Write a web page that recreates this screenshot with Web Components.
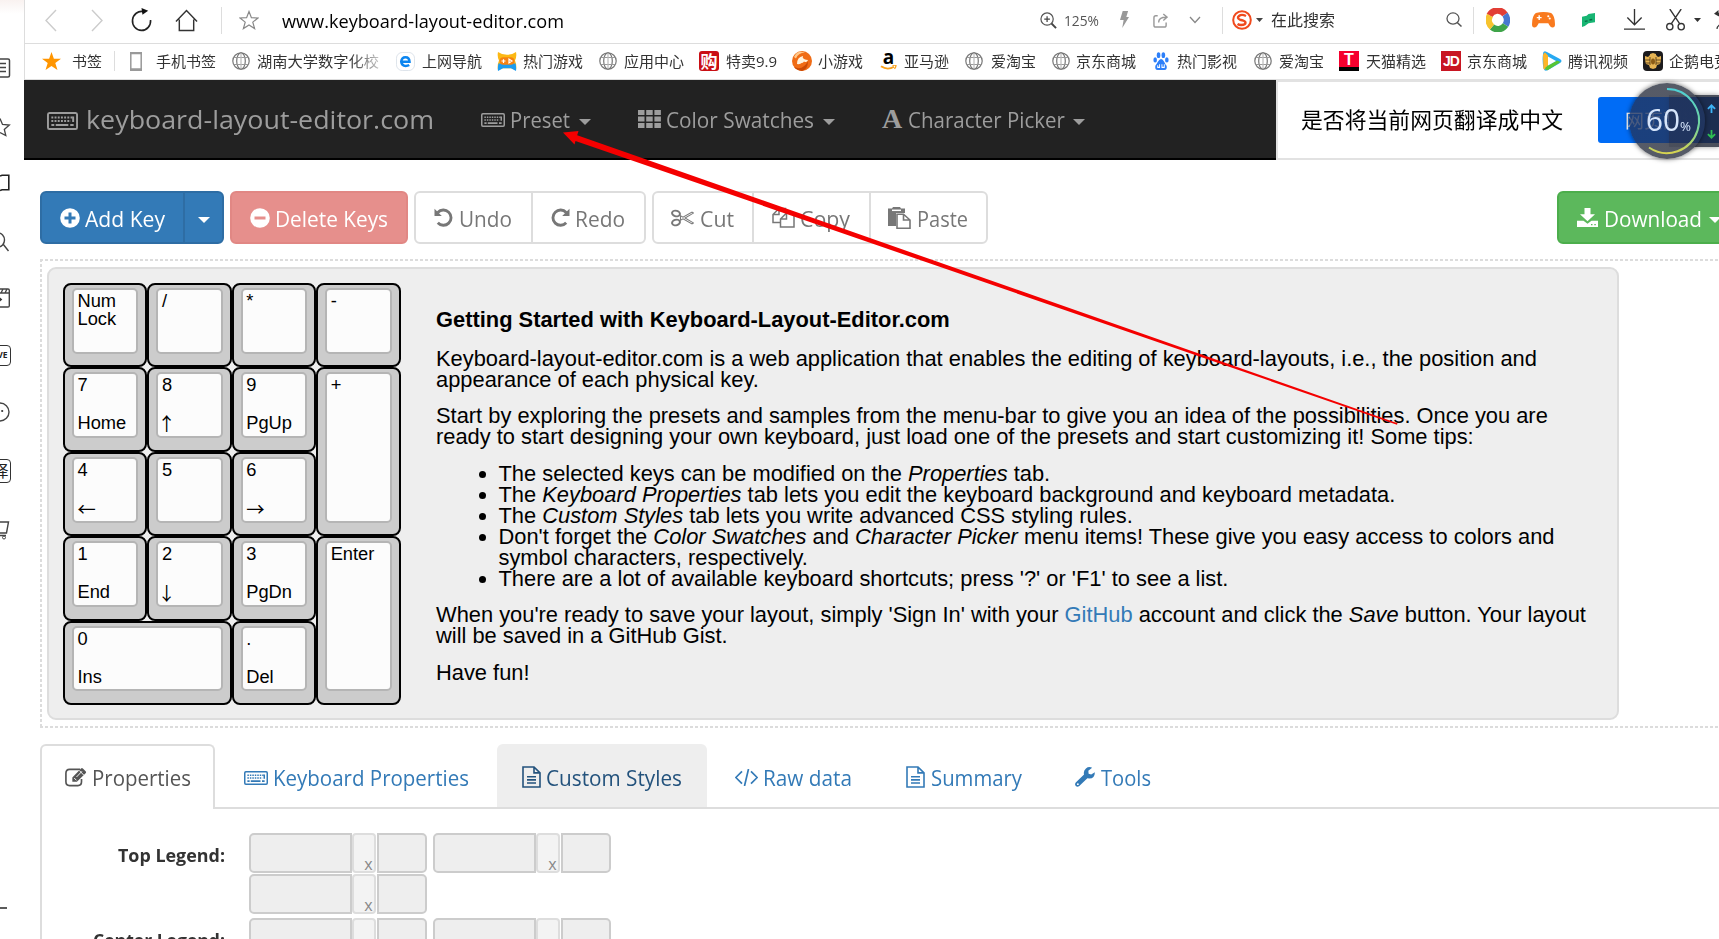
<!DOCTYPE html>
<html lang="zh-CN">
<head>
<meta charset="utf-8">
<title>keyboard-layout-editor.com</title>
<style>
html,body{margin:0;padding:0;width:1719px;height:939px;overflow:hidden;background:#fff}
body{font-family:"Open Sans","Noto Sans CJK SC",sans-serif;color:#333}
</style>
</head>
<body>
<browser-window></browser-window>
<script>
const define=(name,html,init)=>customElements.define(name,class extends HTMLElement{
  constructor(){super();this.attachShadow({mode:'open'});}
  connectedCallback(){this.shadowRoot.innerHTML=typeof html==='function'?html(this):html;if(init)init(this);}
});
const at=(e,n,d='')=>e.getAttribute(n)??d;

/* Icon set: [viewBox, markup]. */
const kb=`<rect x="1" y="1" width="30" height="16" rx="1.5" fill="none" stroke="currentColor" stroke-width="2"/><path d="M4.5 5.5h23M4.5 9h20" stroke="currentColor" stroke-width="2" stroke-dasharray="2 1.3" fill="none"/><path d="M4.5 13h3M9 13h13M24 13h3.500M27 4.500v5.500" stroke="currentColor" stroke-width="2" fill="none"/>`;
const doc=`<path d="M1 1h11l6 6v14.500H1zM12 1v6h6M5 11h9M5 14.200h9M5 17.400h9" fill="none" stroke="currentColor" stroke-width="1.600"/>`;
const ICONS={
back:['0 0 12 24','<path d="M11 1 1 12l10 11" fill="none" stroke="#ccc" stroke-width="1.4"/>'],
fwd:['0 0 12 24','<path d="M1 1l10 11L1 23" fill="none" stroke="#ccc" stroke-width="1.4"/>'],
reload:['0 0 22 24','<path d="M13 3.600A9.500 9.500 0 1 0 20.500 12" fill="none" stroke="#222" stroke-width="1.700"/><path d="M11 0l7 2.800-6 4z" fill="#111"/>'],
home:['0 0 24 24','<path d="M1 13 12 1.500 23 13M4.500 11v11.500h15V11" fill="none" stroke="#333" stroke-width="1.500"/>'],
starline:['0 0 20 20','<path d="M10 1.500l2.400 6.200 6.600.3-5.200 4.100 1.800 6.500L10 15l-5.600 3.600 1.800-6.500L1 8l6.600-.3z" fill="none" stroke="currentColor" stroke-width="1.200"/>'],
star:['0 0 20 20','<path d="M10 0l2.500 7H20l-6 4.500 2.300 7.500L10 14.800 3.700 19 6 11.500 0 7h7.500z" fill="#ff9500"/>'],
zoomin:['0 0 18 18','<circle cx="7.500" cy="7.500" r="6.500" fill="none" stroke="#555" stroke-width="1.300"/><path d="M12.200 12.200 17 17" stroke="#444" stroke-width="2"/><path d="M7.500 4.500v6M4.500 7.500h6" stroke="#444" stroke-width="1.300"/>'],
bolt:['0 0 10 17','<path d="M3 0h6L7 6h3L2.500 17 4 9H0z" fill="#999"/>'],
share:['0 0 16 16','<path d="M5 3H3Q1 3 1 5v8q0 2 2 2h9q2 0 2-2v-3M6 10Q6 4.500 14 4.500M11 1l4 3.500L11 8" fill="none" stroke="#999" stroke-width="1.500"/>'],
chev:['0 0 12 8','<path d="M1 1l5 5.500L11 1" fill="none" stroke="#888" stroke-width="1.300"/>'],
sogou:['0 0 20 20','<circle cx="10" cy="10" r="8.800" fill="none" stroke="#f04a1d" stroke-width="2"/><path d="M14 6Q9.500 3.800 7 6t1 3.700q5.500 1 5.500 3T9 15q-2 0-3.500-1" fill="none" stroke="#f04a1d" stroke-width="2.400"/>'],
search:['0 0 16 16','<circle cx="7" cy="7" r="6" fill="none" stroke="#555" stroke-width="1.300"/><path d="M11.200 11.200 15.500 15.500" stroke="#555" stroke-width="1.500"/>'],
ring:['0 0 24 24','<g fill="none" stroke-width="6.500"><path d="M3.500 7.500A9 9 0 0 1 19 6.500" stroke="#e23e35"/><path d="M19 6.500A9 9 0 0 1 19.500 17" stroke="#4878cf"/><path d="M19.500 17A9 9 0 0 1 6 19" stroke="#3fa44a"/><path d="M6 19A9 9 0 0 1 4 7.500" stroke="#f7c32e"/></g>'],
pad:['0 0 24 17','<path d="M4 1Q12-1 20 1q4 3 4 12 0 3.500-2.500 3.500T17 12H7q-2 4.500-4.500 4.500T0 13Q0 4 4 1z" fill="#f97a1f"/><path d="M5 6h5M7.500 3.500v5" stroke="#fff" stroke-width="1.500"/><circle cx="17" cy="4.500" r="1.100" fill="#fff"/><circle cx="18.500" cy="7" r="1.100" fill="#fff"/>'],
green:['0 0 14 15','<path d="M0 4l5-1 2-2 7-1v10l-7 1-4 3-3 1z" fill="#18b573"/><path d="M3 9l3-.6M8 7.500l3-.6" stroke="#086c45" stroke-width="1.500"/>'],
dl:['0 0 22 22','<path d="M11 0v16M3.500 9l7.500 7.500L18.500 9M0 21h22" fill="none" stroke="#333" stroke-width="1.400"/>'],
scis:['0 0 20 23','<g fill="none" stroke="#333" stroke-width="1.400"><circle cx="4" cy="18.500" r="3.300"/><circle cx="16" cy="18.500" r="3.300"/><path d="M5.500 15.500 16 0M14.500 15.500 4 0"/></g>'],
arc:['0 0 8 22','<path d="M0 4l6-4v3h4v4H6z" fill="#333"/><path d="M4 21q0-3 4-5" fill="none" stroke="#333" stroke-width="1.500"/>'],
caret:['0 0 12 6','<path d="M0 0h12L6 6z" fill="currentColor"/>'],
phone:['0 0 12 19','<path d="M.8.8h10.400v17.400H.8z" fill="#fff" stroke="#999" stroke-width="1.500"/><path d="M0 1h12M0 17.500h12" stroke="#999" stroke-width="2.400"/>'],
globe:['0 0 18 18','<g fill="none" stroke="#777" stroke-width="1.200"><circle cx="9" cy="9" r="8.200"/><ellipse cx="9" cy="9" rx="4.300" ry="8.200"/><path d="M1.600 5.500h14.800M1.600 12.500h14.800" stroke="#999"/><path d="M9 1v16" stroke="#bbb"/></g>'],
edge:['0 0 20 20','<rect x=".5" y=".5" width="19" height="19" rx="6" fill="#fff" stroke="#dce3ea"/><path d="M5.500 10.200h8.700Q14 5.500 10 5.500T5.500 10.200Q6 14.700 10.200 14.700q2.200 0 3.700-1" fill="none" stroke="#0b85f0" stroke-width="2.700"/>'],
cat:['0 0 20 20','<path d="M1 0q4 3 9 3t9-3q1 5-1 9 2 5 1 10l-5-2H6l-5 2Q0 14 2 9 0 5 1 0z" fill="#fcb814"/><path d="M1.500 12h17q1 4 .5 8l-5-3H6l-5 3q-.5-4 .5-8z" fill="#1c9cf0"/><rect x="2.500" y="5.500" width="15" height="8" rx="4" fill="#f58213"/><path d="M4.500 9.500h4M6.500 7.500v4M12 7.500v4l3-2z" stroke="#fff" stroke-width="1.200" fill="none"/>'],
orange:['0 0 20 20','<circle cx="10" cy="10" r="10" fill="#f06c16"/><path d="M2 6Q5-1 13 1.500q-7 .5-9 6z" fill="#ffc98a"/><path d="M5 13q0-7 6-8-1 2 1 3t4 1q-1 3-4 1.500-1 1.500-2.500 1.500-1 1.500-4.500 1z" fill="#fff3df"/><path d="M2 16q9 4 14-6 0 8-6 10-6-1-8-4z" fill="#ca4a05"/>'],
smile:['0 0 17 7','<path d="M1 1.500q6.500 5 13 .5" fill="none" stroke="#f9a11b" stroke-width="2"/><path d="M12.500.5q3.500-.8 3.500.5t-1.500 3.500" fill="none" stroke="#f9a11b" stroke-width="1.300"/>'],
baidu:['0 0 17 17','<g fill="#2d7ff9"><ellipse cx="2.300" cy="7.500" rx="1.900" ry="2.500"/><ellipse cx="5.900" cy="3" rx="1.900" ry="2.700"/><ellipse cx="11" cy="3" rx="1.900" ry="2.700"/><ellipse cx="14.700" cy="7.500" rx="1.900" ry="2.500"/><path d="M8.500 6.500q2 0 3.500 3t2.500 3.500q.8 4-2.500 4H5q-3.300 0-2.500-4Q3.500 12 5 9.500t3.500-3z"/></g><path d="M5 12.500v2h2v-3M9.500 11.500v3h2.500v-3" stroke="#fff" fill="none"/>'],
tv:['0 0 20 20','<path d="M1 3Q1-1 5 1l13 7q3 2 0 4L6 19q-4 2-4.500-2Q0 10 1 3z" fill="#26a9f2"/><path d="M1 4q.5 -2 2-2.500l3 3v10l-3 4Q1 19 1.300 15z" fill="#fdb528"/><path d="M3 17l3-2.500 9-5 3.500 1.500L6 19q-2 1-3-2z" fill="#58c532"/><path d="M6 5.500v9l8-4.500z" fill="#fff"/>'],
goose:['0 0 20 20','<rect width="20" height="20" rx="4" fill="#1c1b1d"/><path d="M2 5l3 1 2-2V3l3-1 3 1v1l2 2 3-1v4l-1 4-3 1-1 3-3 1-3-1-1-3-3-1-1-4z" fill="#e6b453"/><path d="M2 9h5M13 9h5M3 12h4M13 12h4M7 6v8M13 6v8" stroke="#4a3415" stroke-width=".8"/><ellipse cx="10" cy="10.500" rx="2" ry="3" fill="#8a5c17"/>'],
kb:['0 0 32 18',kb],
grid:['0 0 23 18','<path d="M0 0h6.500v5H0zM8.200 0h6.500v5H8.200zM16.400 0h6.500v5h-6.500zM0 6.500h6.500v5H0zM8.200 6.500h6.500v5H8.200zM16.400 6.500h6.500v5h-6.500zM0 13h6.500v5H0zM8.200 13h6.500v5H8.200zM16.400 13h6.500v5h-6.500z" fill="currentColor"/>'],
plus:['0 0 20 20','<circle cx="10" cy="10" r="9.800" fill="#fff"/><path d="M10 4.500v11M4.500 10h11" stroke="#337ab7" stroke-width="3"/>'],
minus:['0 0 20 20','<circle cx="10" cy="10" r="9.800" fill="#fff"/><path d="M4.500 10h11" stroke="#e68f8c" stroke-width="3"/>'],
undo:['0 0 20 20','<path d="M4 4.800A8 8 0 1 1 4 15.500" fill="none" stroke="currentColor" stroke-width="3"/><path d="M.5.8v7.700h7.700z" fill="currentColor"/>'],
redo:['0 0 20 20','<path d="M16 4.800A8 8 0 1 0 16 15.500" fill="none" stroke="currentColor" stroke-width="3"/><path d="M19.500.8v7.700h-7.700z" fill="currentColor"/>'],
cut:['0 0 23 20','<g fill="none" stroke="currentColor"><ellipse cx="5" cy="5" rx="4" ry="3" transform="rotate(20 5 5)" stroke-width="2"/><ellipse cx="5" cy="15" rx="4" ry="3" transform="rotate(-20 5 15)" stroke-width="2"/><path d="M8 6.500 12 9l9-5.500 1.500 1L14 10l8.500 5.500-1.500 1L12 11 8 13.500M9.500 8v4" stroke-width="1.100"/></g>'],
copy:['0 0 23 21','<path d="M8 15.500H1V7.500l6-6h6.500v4M7 1.500v6H1M8.500 12l6-6H22v14H8.500zM14.500 6v6h-6" fill="none" stroke="currentColor" stroke-width="1.500"/>'],
paste:['0 0 23 22','<path d="M0 1.500h4L5 0h7l1 1.500h4V6H8v13H0z" fill="currentColor"/><path d="M4 3.300h9" stroke="#fff" stroke-width="1.500"/><path d="M9 7.200h6.500L22 13v8.200H9zM15.500 7.200V13H22" fill="#fff" stroke="currentColor" stroke-width="1.600"/>'],
save:['0 0 21 20','<path d="M7.500 0h6v6.500H18L10.500 14 3 6.500h4.500z" fill="#fff"/><path d="M0 13.500h6.500l4 3 4-3H21V20H0z" fill="#fff"/><path d="M14 17.500h1.500M17.300 17.500h1.500" stroke="#5cb85c" stroke-width="1.500"/>'],
edit:['0 0 24 20','<path d="M16.500 1.500H5q-4 0-4 4v9q0 4 4 4h9q4 0 4-4v-3" fill="none" stroke="currentColor" stroke-width="1.800"/><path d="M8 14.500V10L17.500.5q1-1 2 0l3 3q1 1 0 2L13 14.500z" fill="currentColor"/><path d="M10 10.500l2.500 2.500M12.500 9.500l6-6M15.500 2.500l5 5" stroke="#fff" stroke-width="1"/>'],
doc:['0 0 19 22.500',doc],
code:['0 0 23 18','<path d="M7 2.500.8 9 7 15.500M16 2.500 22.200 9 16 15.500M13.500 0 9.500 18" fill="none" stroke="currentColor" stroke-width="1.700"/>'],
wrench:['0 0 21 21','<path d="M20.800 5.500Q21 12 15 12l-2-.3L4.500 20q-2 1.500-3.700 0-1.500-1.700 0-3.700L9.500 8Q8.500 4 11.500 1.500T18 .8l-4 3.200.3 3 2.700.8z" fill="currentColor"/><circle cx="3" cy="18" r="1" fill="#fff"/>'],
up:['0 0 10 10','<path d="M5 10V1.500M1 5.500l4-4 4 4" fill="none" stroke="#3db3f5" stroke-width="2"/>'],
down:['0 0 10 10','<path d="M5 0v8.500M1 4.500l4 4 4-4" fill="none" stroke="#2fbf52" stroke-width="2"/>'],
s_list:['0 0 12 20','<path d="M0 1h8q1.500 0 1.500 1.500v15q0 1.500-1.500 1.500H0M0 5.500h6M0 9.500h6M0 13.500h6" fill="none" stroke="#444" stroke-width="1.500"/>'],
s_star:['0 0 12 20','<path d="M0 1.500l2.500 6 6.800.5-5 4.500 1.500 6L0 15.500" fill="none" stroke="#444" stroke-width="1.300"/>'],
s_book:['0 0 12 20','<path d="M0 3l2-.8h6.800v14.500H2L0 17.500" fill="none" stroke="#222" stroke-width="1.600"/>'],
s_search:['0 0 12 20','<path d="M-2 1a6.500 7 0 1 1 0 14M3 12l5.500 7" fill="none" stroke="#444" stroke-width="1.400"/>'],
s_cal:['0 0 12 20','<path d="M0 1h8q1.300 0 1.300 1.300v15.400q0 1.300-1.300 1.300H0M0 5h9M3 1L1 5M7 1L5 5" fill="none" stroke="#444" stroke-width="1.400"/><path d="M0 9.500l2.300 2-2.300 2z" fill="#333"/>'],
s_face:['0 0 12 20','<circle cx="0" cy="10" r="9" fill="none" stroke="#444" stroke-width="1.400"/><circle cx="2.200" cy="9" r="1.100" fill="#333"/>'],
s_cart:['0 0 12 20','<path d="M0 2h8.500L6.500 13H0M0 15.500h6" fill="none" stroke="#444" stroke-width="1.400"/><circle cx="4" cy="17.500" r="1.500" fill="none" stroke="#444"/>'],
s_dash:['0 0 12 4','<path d="M0 2h7" stroke="#333" stroke-width="1.600"/>']
};
define('ui-icon',e=>{const [vb,m]=ICONS[at(e,'name')];
return `<style>:host{display:block;flex:none;width:${at(e,'w')}px;height:${at(e,'h')}px}svg{display:block;width:100%;height:100%}</style><svg viewBox="${vb}" preserveAspectRatio="none">${m}</svg>`});

/* Bookmark badge made of a coloured tile and a character. */
define('tile-badge',`<style>:host{display:flex;flex:none;width:20px;height:20px;align-items:center;justify-content:center;color:#fff;overflow:hidden;line-height:20px}</style><slot></slot>`);

/* One keycap: top-left legend and optional lower legend. */
define('key-cap',e=>`<style>
:host{display:block;box-sizing:border-box;border:2px solid #000;border-radius:8px;background:#ccc;padding:3px 7px 11.500px;font:18.300px/18px "Liberation Sans","DejaVu Sans",sans-serif;color:#000}
.top{box-sizing:border-box;height:100%;border:2px solid #b5b5b5;border-radius:5px;background:#fcfcfc;padding:2px 0 0 3.500px;white-space:nowrap}
.low{margin-top:20px;white-space:pre}
.arrow{font-family:"Noto Sans CJK SC",sans-serif}
.vert{text-indent:-4.500px}
</style><div class="top"><div>${at(e,'a')}</div>${e.hasAttribute('b')?`<div class="low ${/[←→]/.test(at(e,'b'))?'arrow':/[↑↓]/.test(at(e,'b'))?'arrow vert':''}">${at(e,'b')}</div>`:''}</div>`);

define('side-strip',`<style>
:host{display:flex;flex-direction:column;box-sizing:border-box;width:24px;height:939px;flex:none;overflow:hidden;background:linear-gradient(#f9f2f0 0,#fff 14px)}
.red{width:8px;height:2px;background:#7c1a10;border-radius:0 0 4px 0;margin-bottom:58px}
ui-icon{margin-bottom:37.500px}
.live,.yi{box-sizing:border-box;width:22px;margin-left:-11.500px;border:1.500px solid #333;border-radius:4px;color:#222;text-align:right;flex:none}
.live{height:21px;font:bold 8.500px/18px "Open Sans",sans-serif;padding-right:2px;margin-bottom:36px}
.yi{height:24px;font:16px/20px "Noto Sans CJK SC",sans-serif;padding-right:1px;margin-bottom:37px}
</style><div class="red"></div>
<ui-icon name="s_list" w="12" h="20" style="margin-bottom:39px"></ui-icon><ui-icon name="s_star" w="12" h="20" style="margin-bottom:36px"></ui-icon><ui-icon name="s_book" w="12" h="20" style="margin-bottom:38.500px"></ui-icon><ui-icon name="s_search" w="12" h="20" style="margin-bottom:36.500px"></ui-icon><ui-icon name="s_cal" w="12" h="20" style="margin-bottom:37px"></ui-icon>
<div class="live">LIVE</div><ui-icon name="s_face" w="12" h="20" style="margin-bottom:36.500px"></ui-icon><div class="yi">译</div><ui-icon name="s_cart" w="12" h="20" style="margin-bottom:366px"></ui-icon><ui-icon name="s_dash" w="12" h="4"></ui-icon>`);

define('address-bar',`<style>
:host{display:flex;align-items:center;height:40px;padding-bottom:3px;border-bottom:1px solid #ddd;border-left:1px solid #ddd;box-sizing:content-box;overflow:hidden;color:#000}
i{width:1px;height:27px;background:#ddd;flex:none}
</style>
<ui-icon name="back" w="12" h="23" style="margin-left:20px"></ui-icon>
<ui-icon name="fwd" w="12" h="23" style="margin-left:34px"></ui-icon>
<ui-icon name="reload" w="21" h="24" style="margin-left:28px"></ui-icon>
<ui-icon name="home" w="23" h="23" style="margin-left:23px"></ui-icon>
<i style="margin-left:23px"></i>
<ui-icon name="starline" w="20" h="20" style="margin-left:17px;color:#888"></ui-icon>
<fit-text w="282" style="font-size:18.500px;margin-left:23px">www.keyboard-layout-editor.com</fit-text>
<ui-icon name="zoomin" w="17" h="17" style="margin-left:476px"></ui-icon>
<fit-text w="35" style="font-size:14px;margin-left:7px;color:#555">125%</fit-text>
<ui-icon name="bolt" w="9" h="17" style="margin-left:21px;margin-top:-1px"></ui-icon>
<ui-icon name="share" w="15" h="15" style="margin-left:24px"></ui-icon>
<ui-icon name="chev" w="12" h="8" style="margin-left:21px"></ui-icon>
<i style="margin-left:21px"></i>
<ui-icon name="sogou" w="20" h="20" style="margin-left:9px"></ui-icon>
<ui-icon name="caret" w="7" h="4" style="margin-left:4px;color:#444"></ui-icon>
<fit-text w="64" style="font-size:16px;margin-left:8px;color:#333;margin-top:-2px">在此搜索</fit-text>
<ui-icon name="search" w="16" h="15" style="margin-left:111px;margin-top:-2px"></ui-icon>
<i style="margin-left:11px"></i>
<ui-icon name="ring" w="24" h="24" style="margin-left:12px"></ui-icon>
<ui-icon name="pad" w="23" h="16" style="margin-left:22px"></ui-icon>
<ui-icon name="green" w="13" h="14" style="margin-left:27px"></ui-icon>
<ui-icon name="dl" w="21" h="21" style="margin-left:29px;margin-top:-1px"></ui-icon>
<ui-icon name="scis" w="19" h="22" style="margin-left:21px;margin-top:-1px"></ui-icon>
<ui-icon name="caret" w="7" h="4" style="margin-left:9px;color:#333"></ui-icon>
<ui-icon name="arc" w="6" h="20" style="margin-left:13px"></ui-icon>`);

define('book-mark',e=>`<style>:host{display:flex;align-items:center;flex:none;width:${at(e,'span')}px;font-size:15px;color:#333}slot[name=icon]{display:block}fit-text{margin-left:${at(e,'gap','7')}px;margin-top:-1px}</style><slot name="icon"></slot><fit-text w="${at(e,'tw')}">${at(e,'label')}</fit-text>`);

const G='<ui-icon slot="icon" name="globe" w="18" h="18"></ui-icon>';
define('bookmark-bar',`<style>
:host{display:flex;align-items:center;height:35px;box-sizing:border-box;padding-left:17px;padding-bottom:1px;border-left:1px solid #ddd;overflow:hidden}
i{width:1px;height:20px;background:#ddd;flex:none;margin-right:15px}
.fade{-webkit-mask:linear-gradient(90deg,#000 118px,rgba(0,0,0,.2) 150px)}
tile-badge.buy{background:#c90f14;border-radius:3px;font:bold 17px/20px "Noto Sans CJK SC",sans-serif}
tile-badge.t{background:linear-gradient(#f5002e 78%,#000 78%);font:bold 16px/18px "Liberation Sans",sans-serif;align-items:flex-start}
tile-badge.jd{background:#c81623;font:bold 14px/20px "Liberation Sans",sans-serif;letter-spacing:-1px}
.am{display:flex;flex-direction:column;align-items:center;width:17px;height:20px;color:#000;font:bold 19px/13px "Open Sans",sans-serif}
.am ui-icon{margin-top:1px}
</style>
<book-mark span="72" tw="30" gap="11" label="书签"><ui-icon slot="icon" name="star" w="19" h="19"></ui-icon></book-mark><i></i>
<book-mark span="102" tw="60" gap="14" label="手机书签"><ui-icon slot="icon" name="phone" w="12" h="19"></ui-icon></book-mark>
<book-mark class="fade" span="164" tw="122" label="湖南大学数字化校">${G}</book-mark>
<book-mark span="101" tw="60" label="上网导航"><ui-icon slot="icon" name="edge" w="19" h="19"></ui-icon></book-mark>
<book-mark span="102" tw="60" gap="6" label="热门游戏"><ui-icon slot="icon" name="cat" w="20" h="19"></ui-icon></book-mark>
<book-mark span="100" tw="60" label="应用中心">${G}</book-mark>
<book-mark span="93" tw="51" label="特卖9.9"><tile-badge slot="icon" class="buy">购</tile-badge></book-mark>
<book-mark span="88" tw="45" gap="6" label="小游戏"><ui-icon slot="icon" name="orange" w="20" h="20"></ui-icon></book-mark>
<book-mark span="85" tw="45" label="亚马逊"><div slot="icon" class="am">a<ui-icon name="smile" w="17" h="6"></ui-icon></div></book-mark>
<book-mark span="87" tw="45" gap="8" label="爱淘宝">${G}</book-mark>
<book-mark span="101" tw="60" gap="6" label="京东商城">${G}</book-mark>
<book-mark span="101" tw="60" gap="8" label="热门影视"><ui-icon slot="icon" name="baidu" w="16" h="18"></ui-icon></book-mark>
<book-mark span="85" tw="45" label="爱淘宝">${G}</book-mark>
<book-mark span="102" tw="60" label="天猫精选"><tile-badge slot="icon" class="t">T</tile-badge></book-mark>
<book-mark span="101" tw="60" gap="6" label="京东商城"><tile-badge slot="icon" class="jd">JD</tile-badge></book-mark>
<book-mark span="101" tw="60" gap="6" label="腾讯视频"><ui-icon slot="icon" name="tv" w="20" h="20"></ui-icon></book-mark>
<book-mark span="101" tw="60" gap="6" label="企鹅电竞"><ui-icon slot="icon" name="goose" w="20" h="20"></ui-icon></book-mark>`);

define('nav-bar',`<style>
:host{display:flex;height:81px;color:#9d9d9d}
.dark{box-sizing:border-box;display:flex;align-items:center;width:1252px;background:#222;border-top:1px solid #ddd;border-bottom:2px solid #000;padding-left:23px;font-size:21.500px}
.tr{box-sizing:border-box;position:relative;display:flex;align-items:center;flex:1;border:solid #e2e2e2;border-width:3px 0 2px 2px;background:#fff;color:#000;padding-left:22.500px}
.tr>fit-text{margin-top:-5px}
.btn{display:flex;align-items:center;height:46px;flex:1;margin-left:35px;background:#006cf6;border-radius:3px 0 0 3px;color:#fff}
.btn fit-text{margin-left:27px;font-size:19px}
.a{font:bold 28px/28px "Liberation Serif",serif;margin-left:47px;width:20px}
</style>
<div class="dark"><ui-icon name="kb" w="31" h="18" style="margin-top:3px"></ui-icon>
<fit-text w="348" style="font-size:26px;margin-left:7.500px">keyboard-layout-editor.com</fit-text>
<ui-icon name="kb" w="24" h="14" style="margin-left:47.500px;margin-top:2px"></ui-icon><fit-text w="60" style="margin-left:5px">Preset</fit-text><ui-icon name="caret" w="12" h="6" style="margin-left:9px;margin-top:6px"></ui-icon>
<ui-icon name="grid" w="23" h="18" style="margin-left:47px"></ui-icon><fit-text w="148" style="margin-left:5px">Color Swatches</fit-text><ui-icon name="caret" w="12" h="6" style="margin-left:9px;margin-top:6px"></ui-icon>
<span class="a">A</span><fit-text w="157" style="margin-left:5.500px">Character Picker</fit-text><ui-icon name="caret" w="12" h="6" style="margin-left:8.500px;margin-top:6px"></ui-icon></div>
<div class="tr"><fit-text w="262" style="font-size:22px">是否将当前网页翻译成中文</fit-text><div class="btn"><fit-text w="76">网页翻译</fit-text></div></div>`);

/* Floating memory monitor that hovers above the window. */
define('speed-ball',`<style>
:host{position:absolute;left:1629px;top:83px;width:90px;height:76px}
.bar{position:absolute;left:40px;right:0;top:12px;height:52px;box-sizing:border-box;background:rgba(29,43,74,.97);border:solid #4b505c;border-width:2px 0 4px;display:flex;flex-direction:column;justify-content:space-between;align-items:flex-end;padding:7px 3px 4px;box-shadow:0 0 5px rgba(0,0,0,.4)}
.ball{position:absolute;left:0;top:0;width:76px;height:76px;border-radius:50%;background:linear-gradient(rgba(73,78,91,.93) 0 14px,rgba(33,54,98,.82) 14px 60px,rgba(73,78,91,.93) 60px);box-shadow:0 0 5px rgba(0,0,0,.6)}
svg{position:absolute;left:0;top:0}
.t{position:absolute;left:17px;top:16px;display:flex;align-items:baseline;color:#d6e5fb;font:31px/40px "Open Sans",sans-serif;}
</style><div class="bar"><ui-icon name="up" w="9" h="9"></ui-icon><ui-icon name="down" w="9" h="9"></ui-icon></div><div class="ball"></div>
<svg width="76" height="76"><defs><linearGradient id="g" x1="0" y1="0" x2="0" y2="1"><stop offset="0" stop-color="#4ed0d5"/><stop offset=".6" stop-color="#74d39b"/><stop offset="1" stop-color="#d6d350"/></linearGradient></defs><path d="M38 6A32 32 0 1 1 20 64.500" fill="none" stroke="url(#g)" stroke-width="2"/></svg>
<div class="t"><fit-text w="34">60</fit-text><fit-text w="11" style="font-size:13px">%</fit-text></div>`);

define('tool-bar',`<style>
:host{display:flex;padding:30.500px 0 0 16px;font-size:22px;color:#777;height:53px}
div{box-sizing:border-box;display:flex;height:53px;border:2px solid #ddd;border-radius:6px;flex:none}
span{display:flex;align-items:center;box-sizing:border-box;padding-top:2px}
span+span{border-left:2px solid #ddd}
fit-text{margin-left:6px}
ui-icon{margin-top:-1px}
.add{width:184px;background:#337ab7;border-color:#2e6da4;color:#fff}.add span{border-color:#2e6da4}
.del{width:178px;margin-left:6px;background:#e68f8c;border-color:#e18784;color:#fff;padding-left:18px}
.ur{width:232px;margin-left:6px}.ccp{width:336px;margin-left:6px}
.dl{width:175px;margin-left:569px;background:#5cb85c;border-color:#4cae4c;color:#fff;padding-left:18px}
</style>
<div class="add"><span style="width:141px;padding-left:18px"><ui-icon name="plus" w="20" h="20"></ui-icon><fit-text w="80" style="margin-left:5px">Add Key</fit-text></span><span style="padding-left:13px"><ui-icon name="caret" w="12" h="6" style="margin-top:4px"></ui-icon></span></div>
<div class="del"><span><ui-icon name="minus" w="20" h="20"></ui-icon><fit-text w="113" style="margin-left:5px">Delete Keys</fit-text></span></div>
<div class="ur"><span style="width:115px;padding-left:18px"><ui-icon name="undo" w="19" h="19"></ui-icon><fit-text w="53" style="margin-left:6px">Undo</fit-text></span><span style="padding-left:18px"><ui-icon name="redo" w="19" h="19"></ui-icon><fit-text w="50" style="margin-left:5px">Redo</fit-text></span></div>
<div class="ccp"><span style="width:98px;padding-left:17px"><ui-icon name="cut" w="23" h="18"></ui-icon><fit-text w="34">Cut</fit-text></span><span style="width:117px;padding-left:18px"><ui-icon name="copy" w="23" h="21"></ui-icon><fit-text w="50" style="margin-left:5px">Copy</fit-text></span><span style="padding-left:17px"><ui-icon name="paste" w="23" h="22"></ui-icon><fit-text w="51">Paste</fit-text></span></div>
<div class="dl"><span><ui-icon name="save" w="21" h="19"></ui-icon><fit-text w="98">Download</fit-text><ui-icon name="caret" w="12" h="6" style="margin-left:7px;margin-top:4px"></ui-icon></span></div>`);

define('key-board',`<style>
:host{display:block;box-sizing:border-box;margin:15px 0 0 16px;width:1760px;height:469px;padding:8px 0 0 7px;
background:repeating-linear-gradient(90deg,#dcdcdc 0 3px,#fff 3px 5px) 0 0/100% 2px no-repeat,repeating-linear-gradient(90deg,#dcdcdc 0 3px,#fff 3px 5px) 0 100%/100% 2px no-repeat,repeating-linear-gradient(#dcdcdc 0 3px,#fff 3px 5px) 0 0/2px 100% no-repeat}
.bg{box-sizing:border-box;width:1572px;height:453px;border:2px solid #ddd;border-radius:9px;background:#eee;display:flex;padding:14.500px 0 0 14px}
.keys{display:grid;grid-template-columns:repeat(4,84.375px);grid-template-rows:repeat(5,84.375px);align-content:start;flex:none}
.doc{margin-left:35.500px;padding-top:25.500px;font:21.875px/21px "Liberation Sans",sans-serif;color:#000;white-space:nowrap}
h4{font-size:21.875px;line-height:21px;margin:0 0 18.700px}
p{margin:0 0 15.600px}p.a{margin-bottom:14.600px}p.b{margin-bottom:16.600px}ul{margin:0 0 15px;padding-left:62.500px}a{color:#337ab7}
</style><div class="bg"><div class="keys">
<key-cap a="Num<br>Lock"></key-cap><key-cap a="/"></key-cap><key-cap a="*"></key-cap><key-cap a="-"></key-cap>
<key-cap a="7" b="Home"></key-cap><key-cap a="8" b="↑"></key-cap><key-cap a="9" b="PgUp"></key-cap><key-cap a="+" style="grid-row:span 2"></key-cap>
<key-cap a="4" b="←"></key-cap><key-cap a="5"></key-cap><key-cap a="6" b="→"></key-cap>
<key-cap a="1" b="End"></key-cap><key-cap a="2" b="↓"></key-cap><key-cap a="3" b="PgDn"></key-cap><key-cap a="Enter" style="grid-row:span 2"></key-cap>
<key-cap a="0" b="Ins" style="grid-column:span 2"></key-cap><key-cap a="." b="Del"></key-cap>
</div><div class="doc"><h4>Getting Started with Keyboard-Layout-Editor.com</h4>
<p class="a">Keyboard-layout-editor.com is a web application that enables the editing of keyboard-layouts, i.e., the position and<br>appearance of each physical key.</p>
<p class="b">Start by exploring the presets and samples from the menu-bar to give you an idea of the possibilities. Once you are<br>ready to start designing your own keyboard, just load one of the presets and start customizing it! Some tips:</p>
<ul><li>The selected keys can be modified on the <em>Properties</em> tab.</li><li>The <em>Keyboard Properties</em> tab lets you edit the keyboard background and keyboard metadata.</li><li>The <em>Custom Styles</em> tab lets you write advanced CSS styling rules.</li><li>Don't forget the <em>Color Swatches</em> and <em>Character Picker</em> menu items! These give you easy access to colors and<br>symbol characters, respectively.</li><li>There are a lot of available keyboard shortcuts; press '?' or 'F1' to see a list.</li></ul>
<p>When you're ready to save your layout, simply 'Sign In' with your <a>GitHub</a> account and click the <em>Save</em> button. Your layout<br>will be saved in a GitHub Gist.</p><p>Have fun!</p></div></div>`);

define('tab-bar',`<style>
:host{display:flex;box-sizing:border-box;margin:16px 0 0 16px;height:65px;font-size:22px;color:#337ab7}
span{display:flex;align-items:center;box-sizing:border-box;flex:none;padding-top:3px;border-bottom:2px solid #ddd;height:65px}
.on{width:175px;border:2px solid #ddd;border-bottom:0;border-radius:6px 6px 0 0;color:#555;padding-left:23px;padding-top:0}
.hov{width:210px;padding-left:25px;color:#23527c;background:#eee;border-radius:6px 6px 0 0}
fit-text{margin-left:6px}
</style>
<span class="on"><ui-icon name="edit" w="22" h="19"></ui-icon><fit-text w="99" style="margin-left:5px">Properties</fit-text></span>
<span style="width:282px;padding-left:28.500px"><ui-icon name="kb" w="24" h="14" style="margin-top:2px"></ui-icon><fit-text w="196" style="margin-left:5px">Keyboard Properties</fit-text></span>
<span class="hov"><ui-icon name="doc" w="19" h="22"></ui-icon><fit-text w="136" style="margin-left:5px">Custom Styles</fit-text></span>
<span style="width:170px;padding-left:28px"><ui-icon name="code" w="23" h="17" style="margin-top:1px"></ui-icon><fit-text w="89" style="margin-left:5px">Raw data</fit-text></span>
<span style="width:169px;padding-left:29px"><ui-icon name="doc" w="19" h="22"></ui-icon><fit-text w="91">Summary</fit-text></span>
<span style="flex:1;padding-left:29px"><ui-icon name="wrench" w="20" h="20" style="margin-top:1px"></ui-icon><fit-text w="50" style="margin-left:6px">Tools</fit-text></span>`);

define('legend-input',`<style>
:host{display:flex;width:178px;height:40px;flex:none}
b{box-sizing:border-box;background:#eee;border:2px solid #ccc}
b:first-of-type{width:103px;border-radius:5px 0 0 5px}b:last-of-type{width:50px;border-radius:0 5px 5px 0}
span{box-sizing:border-box;width:24px;margin:0 .5px;background:#f3f3f3;border:2px solid #ddd;border-radius:4px;display:flex;align-items:flex-end;justify-content:flex-end;padding:0 1.500px 0 0;font:16px/13px "Open Sans",sans-serif;color:#888}
</style><b></b><span>x</span><b></b>`);

define('prop-row',e=>`<style>
:host{display:flex}
.l{width:183px;display:flex;justify-content:flex-end;flex:none;font:bold 17.500px/24px "Open Sans",sans-serif;color:#333;padding-top:10px}
.f{display:flex;flex-wrap:wrap;gap:1px 6px;width:380px;margin-left:23.500px}
</style><div class="l"><fit-text w="${at(e,'tw')}">${at(e,'label')}</fit-text></div><div class="f"><slot></slot></div>`);

define('prop-panel',`<style>:host{display:flex;flex-direction:column;gap:4px;box-sizing:border-box;margin-left:16px;border-left:2px solid #ddd;padding-top:24.500px;height:200px}</style>
<prop-row label="Top Legend:" tw="107"><legend-input></legend-input><legend-input></legend-input><legend-input></legend-input></prop-row>
<prop-row label="Center Legend:" tw="132"><legend-input></legend-input><legend-input></legend-input><legend-input></legend-input></prop-row>`);

define('red-arrow',`<style>:host{position:absolute;left:0;top:0;width:1719px;height:939px}svg{display:block}</style>
<svg width="1719" height="939"><path d="M563 132.500l15.500-1.500-1.300 4.200L1397.500 423.300l-.5 1.500L575.500 141l-1 3.500z" fill="#f40000"/></svg>`);

define('browser-window',`<style>
:host{display:flex;position:relative;width:1719px;height:939px;overflow:hidden}
main{width:1695px;flex:none;height:939px;overflow:hidden}
</style><side-strip></side-strip><main><address-bar></address-bar><bookmark-bar></bookmark-bar><nav-bar></nav-bar><tool-bar></tool-bar><key-board></key-board><tab-bar></tab-bar><prop-panel></prop-panel></main><speed-ball></speed-ball><red-arrow></red-arrow>`);

/* Single-line label condensed or widened to an exact width. */
define('fit-text',e=>`<style>:host{display:block;flex:none;width:${at(e,'w')}px;white-space:nowrap}span{display:inline-block;transform-origin:0 50%}</style><span><slot></slot></span>`,
e=>{const s=e.shadowRoot.querySelector('span');const n=s.getBoundingClientRect().width;if(n)s.style.transform=`scaleX(${at(e,'w')/n})`;});
</script>
</body>
</html>
